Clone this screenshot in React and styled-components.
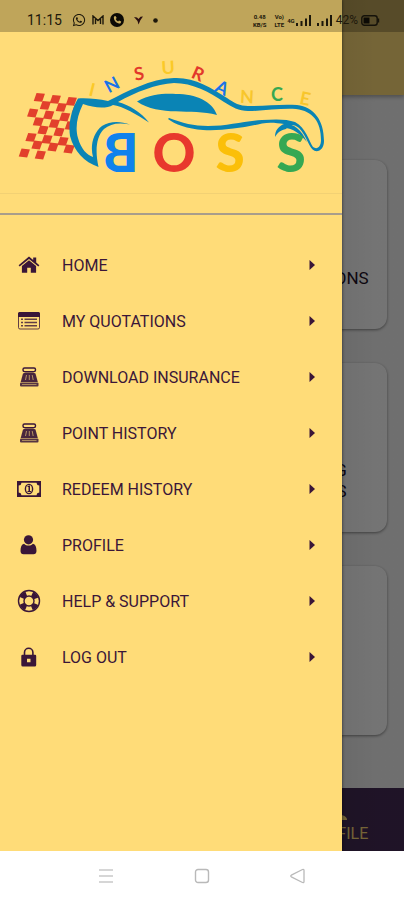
import React from 'react';
import styled, { createGlobalStyle } from 'styled-components';
import { FaWhatsapp } from 'react-icons/fa';

const GlobalStyle = createGlobalStyle`
  *, *::before, *::after { box-sizing: border-box; }
  body { margin: 0; font-family: Roboto, "Liberation Sans", sans-serif; background: #fff; }
  button { font: inherit; border: 0; padding: 0; background: none; cursor: pointer; }
  ul { list-style: none; margin: 0; padding: 0; }
`;

const Phone = styled.div`
  display: flex;
  flex-direction: column;
  min-height: 100vh;
`;

const Screen = styled.div`
  position: relative;
  flex: 1;
  display: flex;
  overflow: hidden;
`;

const Page = styled.div`
  flex: 1;
  display: flex;
  flex-direction: column;
  background: #f2f2f2;
`;

const PageHeader = styled.header`
  height: 95px;
  background: #ffdc78;
  box-shadow: 0 2px 4px rgba(0, 0, 0, 0.3);
`;

const Cards = styled.main`
  flex: 1;
  display: grid;
  grid-template-columns: 1fr 1fr;
  align-content: start;
  gap: 34px;
  padding: 65px 17px 0;
`;

const Card = styled.section`
  grid-column: 2;
  height: 169px;
  display: flex;
  flex-direction: column;
  align-items: center;
  justify-content: flex-end;
  padding-bottom: ${({ $lines }) => ($lines > 1 ? 30 : 40)}px;
  border-radius: 12px;
  background: #fdfdfd;
  box-shadow: 0 1px 3px rgba(0, 0, 0, 0.45);
  color: #1c1026;
  font-size: 17px;
  font-weight: 400;
  line-height: 21px;
  white-space: nowrap;
`;

const TabBar = styled.nav`
  height: 63px;
  display: flex;
  justify-content: flex-end;
  background: #432a54;
`;

const Tab = styled.a`
  width: 33%;
  display: flex;
  flex-direction: column;
  align-items: center;
  justify-content: flex-end;
  padding-bottom: 7px;
  color: #ffdc78;
  font-size: 16px;
  line-height: 20px;
  text-decoration: none;
`;

const Scrim = styled.div`
  position: absolute;
  inset: 0;
  background: linear-gradient(to right, rgba(0, 0, 0, 0.56) 85%, rgba(0, 0, 0, 0.54) 93%);
`;

const Drawer = styled.aside`
  position: absolute;
  inset: 0 62px 0 0;
  padding-top: 32px;
  background: #ffdc78;
  box-shadow: 0 0 3px rgba(0, 0, 0, 0.6);
`;

const LogoBox = styled.div`
  padding-bottom: 19px;
  border-bottom: 2px solid #a99d8b;
  svg { display: block; width: 100%; border-bottom: 1px solid #f2d174; }
`;

const Menu = styled.ul`
  padding-top: 22px;
`;

const MenuButton = styled.button`
  width: 100%;
  height: 56px;
  display: grid;
  grid-template-columns: 24px 1fr 8px;
  align-items: center;
  column-gap: 21px;
  padding: 0 26px 0 17px;
  color: #3a1638;
  font-size: 16px;
  font-weight: 400;
  text-align: left;
  svg { display: block; }
`;

const StatusBar = styled.div`
  position: absolute;
  inset: 0 0 auto 0;
  height: 32px;
  display: flex;
  align-items: center;
  justify-content: space-between;
  padding: 8px 24px 0 27px;
  background: rgba(0, 0, 0, 0.25);
  color: #1d180b;
  font-size: 14px;
`;

const StatusGroup = styled.div`
  display: flex;
  align-items: center;
  gap: ${({ $gap }) => $gap}px;
`;

const Stack = styled.span`
  display: flex;
  flex-direction: column;
  align-items: center;
  gap: 1px;
  font-size: 6px;
  font-weight: 700;
  line-height: 7px;
`;

const Percent = styled.span`
  font-size: 12px;
`;

const SystemNav = styled.nav`
  height: 49px;
  display: flex;
  align-items: center;
  justify-content: space-between;
  padding: 0 97px;
  background: #fff;
  svg { display: block; }
`;

const flagRows = [
  [73, 28, 3], [91, 52, 3], [53, 75, 3], [70, 101, 3],
  [84, 126, 2], [48, 148, 3], [66, 171, 3], [28, 195, 2],
];

const arcLetters = [
  ['I', 92, 90, 14, '#fbc928'], ['N', 112, 85, -28, '#1a73e8'], ['S', 139, 74, -10, '#e2382b'],
  ['U', 168, 68, -3, '#fbc928'], ['R', 198, 74, 24, '#e2382b'], ['A', 222, 88, 26, '#1a73e8'],
  ['N', 247, 97, 3, '#f8c62c'], ['C', 277, 95, 0, '#36a852'], ['E', 305, 99, 12, '#f8c62c'],
];

const bossLetters = [['O', 174, '#e8382d'], ['S', 230, '#fbbf09'], ['S', 291, '#35a853']];

function Logo() {
  return (
    <svg viewBox="0 32 342 161" role="img" aria-label="Insurance Boss">
      <g fill="#e2402c">
        {flagRows.flatMap(([x, y, n]) =>
          Array.from({ length: n }, (_, i) => {
            const cx = 15 + (x + i * 48) / 3;
            const cy = 88 + (y + i * 6) / 3;
            return <path key={`${x}-${y}-${i}`} d={`M${cx - 2.8} ${cy - 4.4}l8.400 .8-2.800 8-8.400-.8z`} />;
          }),
        )}
      </g>
      <path fill="#ffdc78" d="M80 100C74 112 72 124 74 134 77 150 86 160 97 164L97 100z" />
      <g fill="#0a84b5">
        <path d="M78 98.500C88 98 98 99 108 101 128 91 150 79 174 78 194 77 212 88 227 98 234 103 240 106 248 106 266 106 280 104 297 105 314 107 324 120 324 141 324 148 320 152 315 151 309 149 307 136 299 128 294 124 289 124 286 129 281 130 278 132 275 137 275 130 279 126 284 124 277 123 270 122 262 123.500 243 128 222 131 203 130 188 129 174 124 168 119L169 118C182 123 194 126 208 126 228 126 244 121 262 120 276 119 287 119 295 122 306 128 309 141 313 147 317 150 321 147 321 140 321 122 313 111 296 109 280 108 265 111 248 111 239 111 232 107 224 102 209 92 193 83 174 83 156 84 136 92 118 102 129 105 141 112 149 122.500 138 115 122 106 113 105 106 109 94 108 83 104 77 116 75 128 78 138 81 149 87 155 93 157 90 146 93 133 102 126 110 121 120 121 130 124.500 118 122 110 124 104 129 96 137 95 151 98.500 167 84 162 74 151 70 136 68 122 72 109 78 98.500z" />
        <path d="M137 101.500C151 94 163 93.500 176 94 196 94 212 101 217 115 191 108 160 117 137 101.500z" />
        <path d="M284 124C292 123 301 128 307 142 300 134 293 128 284 128z" />
      </g>
      <g fontFamily="Lato, sans-serif" textAnchor="middle">
        <g fontSize="18" fontWeight="700">
          {arcLetters.map(([ch, x, y, r, fill], i) => (
            <text key={i} fill={fill} transform={`translate(${x} ${y}) rotate(${r})`} y="6">{ch}</text>
          ))}
        </g>
        <g fontSize="53" fontWeight="900">
          <text fill="#0f82ec" transform="translate(121 172) scale(-1 1)">B</text>
          {bossLetters.map(([ch, x, fill]) => (
            <text key={x} x={x} y="172" fill={fill}>{ch}</text>
          ))}
        </g>
      </g>
    </svg>
  );
}

const icons = {
  home: (
    <>
      <path d="M12 3.600L1.600 12.200l1.100 1.300L12 5.900l9.300 7.600 1.100-1.300-3.200-2.700V4.400h-3v2.700z" />
      <path d="M12 7.300L4.900 13.100v6.600h5.300v-5h3.600v5h5.300v-6.600z" />
    </>
  ),
  list: (
    <>
      <path d="M2.500 3h19A1.500 1.500 0 0 1 23 4.500V8H1V4.500A1.500 1.500 0 0 1 2.500 3z" />
      <rect x="1.500" y="3.500" width="21" height="16.500" rx="1.500" fill="none" stroke="currentColor" strokeOpacity=".8" />
      <path opacity=".8" d="M4 9.500h2V11H4zM7.500 9.500H20V11H7.500zM4 12.700h2v1.500H4zM7.500 12.700H20v1.500H7.500zM4 16h2v1.500H4zM7.500 16H20v1.500H7.500z" />
    </>
  ),
  press: (
    <>
      <rect x="6" y="3" width="12.500" height="3.600" rx="1.500" fill="none" stroke="currentColor" strokeWidth="1.400" />
      <path opacity=".92" d="M8.500 7.500h7.500l2.500 1 2.300 8.500H3.700L6 8.500z" />
      <path stroke="#ffdc78" strokeWidth=".6" d="M9.500 10l-1 5M12.300 10v5M15.200 10l1 5" />
      <rect x="3" y="17.500" width="18.500" height="4" rx="1" opacity=".85" />
      <path stroke="#ffdc78" strokeWidth=".5" d="M5 19.500h14.500" />
    </>
  ),
  money: (
    <>
      <path fillRule="evenodd" d="M0 4h24v16H0zM4.500 5.700A3 3 0 0 1 1.700 8.500v7a3 3 0 0 1 2.800 2.800h15a3 3 0 0 1 2.800-2.800v-7a3 3 0 0 1-2.800-2.800z" />
      <ellipse cx="12" cy="12" rx="3.600" ry="4.600" fill="none" stroke="currentColor" strokeWidth="1.400" />
      <path d="M10.500 9.300L12 8.500h1v5.500h1v1h-3.500v-1h1v-4h-1z" />
    </>
  ),
  user: (
    <>
      <circle cx="11.500" cy="6.800" r="4.600" />
      <path d="M7 10.800c1.200 1.300 2.800 1.800 4.500 1.800s3.300-.5 4.500-1.800c2.400.6 3.500 3.300 3.500 7.200 0 2-1.200 3.300-3 3.300h-10c-1.800 0-3-1.300-3-3.300 0-3.900 1.100-6.600 3.500-7.200z" />
    </>
  ),
  ring: (
    <g fill="none" stroke="currentColor">
      <circle cx="12" cy="12" r="10.500" strokeWidth="1.400" />
      <circle cx="12" cy="12" r="5" strokeWidth="1.400" />
      <circle cx="12" cy="12" r="7.600" strokeWidth="5" strokeDasharray="5.970 5.970" strokeDashoffset="-2.980" />
    </g>
  ),
  lock: (
    <>
      <path d="M7.500 11V7.500a4.200 4.200 0 0 1 8.400 0V11" fill="none" stroke="currentColor" strokeWidth="1.600" />
      <path fillRule="evenodd" d="M5.500 9.800H18a1.200 1.200 0 0 1 1.200 1.200v9a1.500 1.500 0 0 1-1.500 1.500H5.800A1.500 1.500 0 0 1 4.300 20v-9a1.200 1.200 0 0 1 1.200-1.200zm4.500 4v3.500h3.500v-3.500z" />
    </>
  ),
};

const menuItems = [
  ['HOME', 'home'], ['MY QUOTATIONS', 'list'], ['DOWNLOAD INSURANCE', 'press'], ['POINT HISTORY', 'press'],
  ['REDEEM HISTORY', 'money'], ['PROFILE', 'user'], ['HELP & SUPPORT', 'ring'], ['LOG OUT', 'lock'],
];

function Signal() {
  return (
    <svg width="17" height="11" viewBox="0 0 17 11" fill="currentColor" aria-hidden="true">
      <path d="M1 8h2v3H1zM5.500 6h2v5h-2zM10 3.500h2V11h-2zM14 0h2v11h-2z" />
    </svg>
  );
}

export default function App() {
  return (
    <>
      <GlobalStyle />
      <Phone>
        <Screen>
          <Page>
            <PageHeader />
            <Cards>
              <Card $lines={1}>MY QUOTATIONS</Card>
              <Card $lines={2}>
                <span>UPCOMING</span>
                <span>RENEWALS</span>
              </Card>
              <Card $lines={1} />
            </Cards>
            <TabBar>
              <Tab href="#profile">
                <svg width="24" height="18" viewBox="0 0 24 18" fill="currentColor" aria-hidden="true">
                  <circle cx="12" cy="5" r="5" />
                  <path d="M2 14c0-4 5-5.500 10-5.500S22 10 22 14z" />
                </svg>
                PROFILE
              </Tab>
            </TabBar>
          </Page>
          <Scrim />
          <Drawer>
            <LogoBox><Logo /></LogoBox>
            <Menu>
              {menuItems.map(([label, icon]) => (
                <li key={label}>
                  <MenuButton type="button">
                    <svg width="24" height="24" viewBox="0 0 24 24" fill="currentColor" aria-hidden="true">{icons[icon]}</svg>
                    {label}
                    <svg width="8" height="12" viewBox="0 0 8 12" fill="currentColor" aria-hidden="true">
                      <path d="M1.500 1L7 6l-5.500 5z" />
                    </svg>
                  </MenuButton>
                </li>
              ))}
            </Menu>
          </Drawer>
          <StatusBar>
            <StatusGroup $gap={10}>
              <span>11:15</span>
              <StatusGroup $gap={6}>
                <FaWhatsapp size={14} />
                <svg width="12" height="10" viewBox="0 0 12 10" fill="none" stroke="currentColor" strokeWidth="1.400" aria-hidden="true">
                  <path d="M1 9.500V1l5 4.500L11 1v8.500M3.500 9V4M8.500 9V4" />
                </svg>
                <svg width="14" height="14" viewBox="0 0 14 14" aria-hidden="true">
                  <circle cx="7" cy="7" r="7" fill="#0c0a05" />
                  <path d="M4 3.500l1.500-.6 1.200 2.200-1 .9c.5 1.100 1.300 1.900 2.400 2.400l.9-1 2.200 1.200-.6 1.600C7.500 11.500 3 7.500 4 3.500z" fill="#c7ab5e" />
                </svg>
              </StatusGroup>
              <svg width="9" height="9" viewBox="0 0 9 9" aria-hidden="true">
                <path d="M0 1l3 .5 1.500 1.500L6.500.8 9 .5 6.500 4 4.500 8.500 3.500 5z" fill="#2a0f10" />
              </svg>
              <svg width="5" height="5" viewBox="0 0 5 5" aria-hidden="true"><circle cx="2.500" cy="2.500" r="2.300" fill="#1d180b" /></svg>
            </StatusGroup>
            <StatusGroup $gap={3}>
              <StatusGroup $gap={8}>
                <Stack><span>0.48</span><span>KB/S</span></Stack>
                <Stack><span>Vo)</span><span>LTE</span></Stack>
              </StatusGroup>
              <StatusGroup $gap={4}>
                <StatusGroup $gap={0}>
                  <Stack><span>4G</span></Stack>
                  <Signal />
                </StatusGroup>
                <Signal />
              </StatusGroup>
              <Percent>42%</Percent>
              <svg width="19" height="11" viewBox="0 0 19 11" aria-hidden="true">
                <rect x=".8" y=".8" width="15.400" height="9.400" rx="2.500" fill="none" stroke="#15120a" strokeWidth="1.400" />
                <rect x="2.500" y="2.500" width="6" height="6" fill="#0c0a05" />
                <path d="M17.500 3.500v4" stroke="#15120a" strokeWidth="1.400" />
              </svg>
            </StatusGroup>
          </StatusBar>
        </Screen>
        <SystemNav aria-label="System">
          <button type="button" aria-label="Recent apps">
            <svg width="18" height="16" viewBox="0 0 18 16" stroke="#c9c9c9" strokeWidth="1.600"><path d="M2 2h14M2 8h14M2 14h14" /></svg>
          </button>
          <button type="button" aria-label="Home">
            <svg width="16" height="16" viewBox="0 0 16 16" fill="none" stroke="#b9b9b9" strokeWidth="1.400"><rect x="1.500" y="1.500" width="13" height="13" rx="2.500" /></svg>
          </button>
          <button type="button" aria-label="Back">
            <svg width="18" height="16" viewBox="0 0 18 16" fill="none" stroke="#b9b9b9" strokeWidth="1.300" strokeLinejoin="round"><path d="M2.300 7.200L13.500 1.500q1.500-.5 1.500 1v11q0 1.500-1.500 1L2.300 8.800q-1-.8 0-1.600z" /></svg>
          </button>
        </SystemNav>
      </Phone>
    </>
  );
}
